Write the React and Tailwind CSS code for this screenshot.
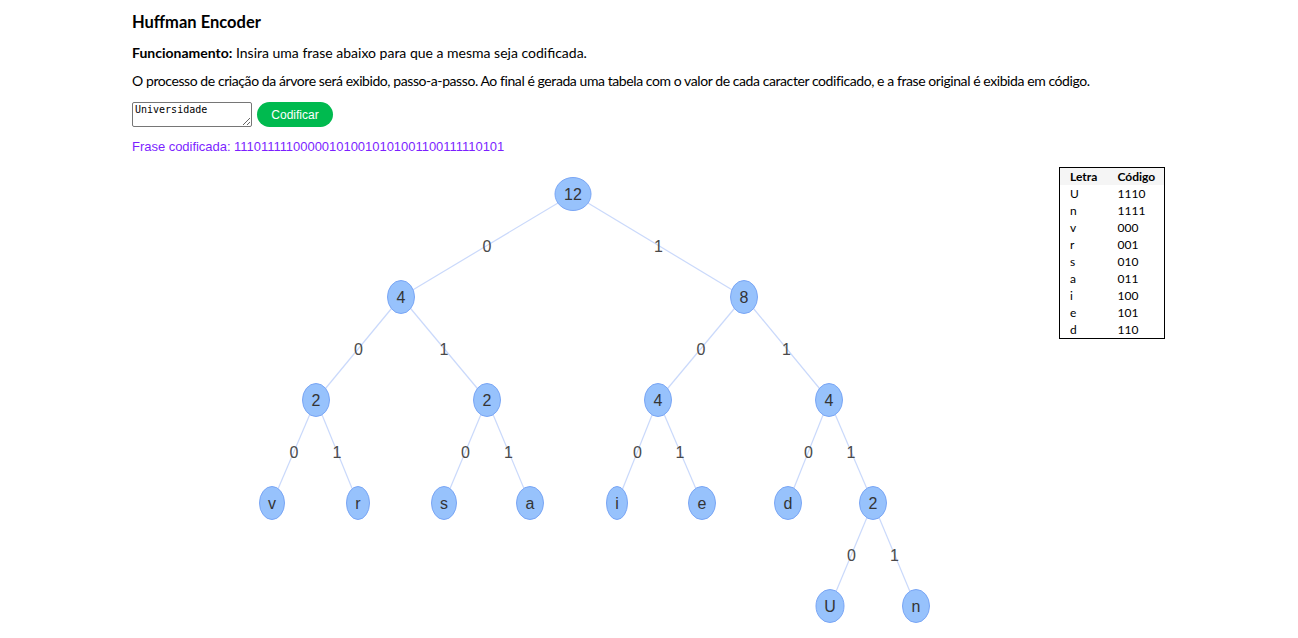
const nodes = [
  { id: 'r', label: '12', x: 573, y: 194, rx: 18 },
  { id: 'a', label: '4', x: 401, y: 297 },
  { id: 'b', label: '8', x: 744, y: 297 },
  { id: 'aa', label: '2', x: 316, y: 400 },
  { id: 'ab', label: '2', x: 487, y: 400 },
  { id: 'ba', label: '4', x: 658, y: 400 },
  { id: 'bb', label: '4', x: 829, y: 400 },
  { id: 'v', label: 'v', x: 272, y: 503, rx: 12.5 },
  { id: 'rr', label: 'r', x: 358, y: 503, rx: 11.5 },
  { id: 's', label: 's', x: 444, y: 503, rx: 12.5 },
  { id: 'as', label: 'a', x: 530, y: 503 },
  { id: 'i', label: 'i', x: 617, y: 503, rx: 10.5 },
  { id: 'e', label: 'e', x: 702, y: 503 },
  { id: 'd', label: 'd', x: 788, y: 503 },
  { id: 'bbb', label: '2', x: 873, y: 503 },
  { id: 'U', label: 'U', x: 830, y: 606, rx: 14 },
  { id: 'n', label: 'n', x: 916, y: 606 },
];

const edges = [
  ['r', 'a', '0'], ['r', 'b', '1'],
  ['a', 'aa', '0'], ['a', 'ab', '1'],
  ['b', 'ba', '0'], ['b', 'bb', '1'],
  ['aa', 'v', '0'], ['aa', 'rr', '1'],
  ['ab', 's', '0'], ['ab', 'as', '1'],
  ['ba', 'i', '0'], ['ba', 'e', '1'],
  ['bb', 'd', '0'], ['bb', 'bbb', '1'],
  ['bbb', 'U', '0'], ['bbb', 'n', '1'],
];

const codes = [
  ['U', '1110'], ['n', '1111'], ['v', '000'], ['r', '001'], ['s', '010'],
  ['a', '011'], ['i', '100'], ['e', '101'], ['d', '110'],
];

const byId = Object.fromEntries(nodes.map((n) => [n.id, n]));

const Tree = () => (
  <svg width="927" height="473" viewBox="132 165 927 473" className="shrink-0">
    {edges.map(([f, t]) => (
      <line
        key={f + t}
        x1={byId[f].x}
        y1={byId[f].y}
        x2={byId[t].x}
        y2={byId[t].y}
        stroke="#cad9fb"
        strokeWidth="1.2"
      />
    ))}
    {edges.map(([f, t, l]) => (
      <text
        key={'l' + f + t}
        x={(byId[f].x + byId[t].x) / 2}
        y={(byId[f].y + byId[t].y) / 2 + 6}
        textAnchor="middle"
        fontFamily="'Liberation Sans', Arial, sans-serif"
        fontSize="16"
        fill="#4a4a4a"
      >
        {l}
      </text>
    ))}
    {nodes.map((n) => (
      <g key={n.id}>
        <ellipse cx={n.x} cy={n.y} rx={n.rx || 13.5} ry="16.5" fill="#97c2fc" stroke="#7aa6f5" strokeWidth="1" />
        <text
          x={n.x}
          y={n.y + 6}
          textAnchor="middle"
          fontFamily="'Liberation Sans', Arial, sans-serif"
          fontSize="16"
          fill="#343434"
        >
          {n.label}
        </text>
      </g>
    ))}
  </svg>
);

export default function App() {
  return (
    <div className="min-h-screen bg-white pl-[132px] pt-[12px] text-black font-['Lato',sans-serif]">
      <h1 className="text-[16.5px] leading-[20px] font-bold">Huffman Encoder</h1>
      <p className="mt-[11px] text-[14px] leading-[20px]">
        <span className="font-bold">Funcionamento:</span> Insira uma frase abaixo para que a mesma seja codificada.
      </p>
      <p className="mt-[8px] text-[14px] leading-[20px] tracking-[-0.42px]">
        O processo de criação da árvore será exibido, passo-a-passo. Ao final é gerada uma tabela com o valor de cada caracter codificado, e a frase original é exibida em código.
      </p>
      <div className="mt-[11px] flex items-start gap-[5px]">
        <textarea
          defaultValue="Universidade"
          className="w-[120px] h-[25px] border border-[#767676] rounded-[2px] px-[2px] py-[1px] text-[10px] leading-[12px] font-['DejaVu_Sans_Mono',monospace] text-black"
        />
        <button className="w-[76px] h-[25px] rounded-full bg-[#00ba4f] text-white text-[12px] font-['Liberation_Sans',Arial,sans-serif]">
          Codificar
        </button>
      </div>
      <p className="mt-[12px] text-[13px] leading-[16px] tracking-[-0.03px] text-[#7c1fff] font-['Liberation_Sans',Arial,sans-serif]">
        Frase codificada: 111011111000001010010101001100111110101
      </p>
      <div className="mt-[10px] flex items-start">
        <Tree />
        <table className="mt-[2px] w-[106px] border border-black text-[12px] leading-[17px] border-collapse">
          <thead>
            <tr className="bg-[#f5f5f5]">
              <th className="text-left font-bold pl-[10px] w-[58px]">Letra</th>
              <th className="text-left font-bold">Código</th>
            </tr>
          </thead>
          <tbody>
            {codes.map(([c, v]) => (
              <tr key={c}>
                <td className="pl-[10px]">{c}</td>
                <td>{v}</td>
              </tr>
            ))}
          </tbody>
        </table>
      </div>
    </div>
  );
}
